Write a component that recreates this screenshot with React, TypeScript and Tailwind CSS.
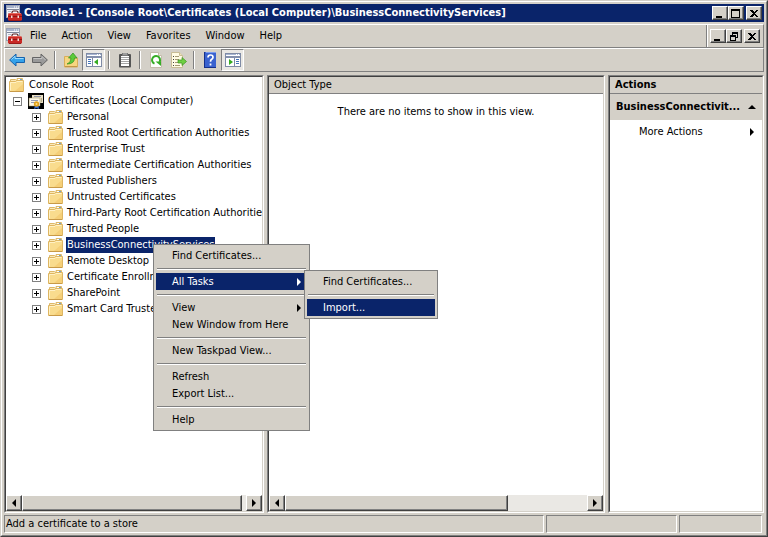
import type { ReactNode } from 'react';
import clsx from 'clsx';

const menus = ['File', 'Action', 'View', 'Favorites', 'Window', 'Help'];

const stores = [
  'Personal',
  'Trusted Root Certification Authorities',
  'Enterprise Trust',
  'Intermediate Certification Authorities',
  'Trusted Publishers',
  'Untrusted Certificates',
  'Third-Party Root Certification Authorities',
  'Trusted People',
  'BusinessConnectivityServices',
  'Remote Desktop',
  'Certificate Enrollment Requests',
  'SharePoint',
  'Smart Card Trusted Roots',
];

const selectedStore = 'BusinessConnectivityServices';

type MenuEntry = { label: string; submenu?: boolean; active?: boolean } | null;

// null is a separator
const contextMenu: MenuEntry[] = [
  { label: 'Find Certificates...' },
  null,
  { label: 'All Tasks', submenu: true, active: true },
  null,
  { label: 'View', submenu: true },
  { label: 'New Window from Here' },
  null,
  { label: 'New Taskpad View...' },
  null,
  { label: 'Refresh' },
  { label: 'Export List...' },
  null,
  { label: 'Help' },
];

const tasksMenu: MenuEntry[] = [
  { label: 'Find Certificates...' },
  null,
  { label: 'Import...', active: true },
];

const raised =
  'bg-[#d4d0c8] border border-t-white border-l-white border-r-[#404040] border-b-[#404040] shadow-[inset_-1px_-1px_0_#808080]';
const sunken =
  'border border-t-[#808080] border-l-[#808080] border-r-white border-b-white';

function Svg({ children, className }: { children: ReactNode; className?: string }) {
  return (
    <svg
      viewBox="0 0 16 16"
      aria-hidden="true"
      className={clsx('h-4 w-4 shrink-0', className)}
    >
      {children}
    </svg>
  );
}

function ConsoleIcon() {
  return (
    <Svg>
      <rect x="0.5" y="0.5" width="13" height="12" fill="#f4f6fa" stroke="#9aa2b4" />
      <rect x="1" y="1" width="12" height="2" fill="#a8b4cc" />
      <path d="M8 2h1M10 2h1M12 2h1" stroke="#fff" />
      <path d="M1 4.5h12" stroke="#7f879a" />
      <path d="M2 6.5h3M2 8.5h1" stroke="#b4bccb" />
      <path d="M6 8.5V7.5q0-1.500 1.500-1.500h3q1.500 0 1.500 1.500v1" fill="none" stroke="#5c2020" strokeWidth="1.200" />
      <path d="M3 8h12l1 1.500v5L15 16H3l-1-1.500v-5z" fill="#c92a26" />
      <path d="M3 8.500h12" stroke="#e8685c" />
      <path d="M2 11.500h14" stroke="#8f1615" />
      <path d="M5 10.500h1.500V13H5zM11.500 10.500H13V13h-1.500z" fill="#f3d8d4" />
      <path d="M3 15.500h12" stroke="#9c1a18" />
    </Svg>
  );
}

function FolderIcon() {
  return (
    <Svg>
      <path d="M1.500 14V2.500h5L8 4V1.500h5.500V14" fill="#fbe9b8" stroke="#dcb868" />
      <path d="M9 2.500h2" stroke="#fff" />
      <path d="M11 2.500h2" stroke="#6d9fd0" />
      <path d="M0.500 14.500v-10h6l1-1h7v11z" fill="#f9dc8e" stroke="#deb662" />
      <path d="M1.500 13.500v-8H7l1-1h5.500" fill="none" stroke="#fff1c4" />
      <path d="M6 14l8-7v7z" fill="#f5cf78" />
      <path d="M1 14.500h13" stroke="#c89a48" />
    </Svg>
  );
}

function CertificateIcon() {
  return (
    <Svg>
      <rect width="16" height="16" fill="#000" />
      <path d="M4 2h11v8H4z" fill="#e9dfc4" />
      <path d="M6 3.500h7" stroke="#8d93a6" />
      <path d="M13.500 5v4" stroke="#b8ad8c" />
      <path d="M1 5h11v8H1z" fill="#fdf8e8" stroke="#9b8c62" strokeWidth="0.500" />
      <path d="M3 7.500h7M3 9.500h4" stroke="#959cb4" />
      <path d="M7 12l-1 4 2.500-1L11 16l-.5-4z" fill="#3567c6" />
      <circle cx="8.500" cy="11" r="2.700" fill="#e3a31c" />
      <circle cx="8.500" cy="11" r="1" fill="#fbe08a" />
    </Svg>
  );
}

function BackIcon() {
  return (
    <Svg>
      <path d="M0.600 8L7 2v3.500h8.500v5H7V14z" fill="#35a2ea" stroke="#1763ad" />
      <path d="M2.500 7.500L6 4.200v2.300h8.500" fill="none" stroke="#9adcff" />
    </Svg>
  );
}

function ForwardIcon() {
  return (
    <Svg>
      <path d="M15.400 8L9 2v3.500H0.500v5H9V14z" fill="#9a9a9a" stroke="#646464" />
      <path d="M1.500 6.500H10V4.500L13.500 8" fill="none" stroke="#c4c4c4" />
    </Svg>
  );
}

function UpFolderIcon() {
  return (
    <Svg>
      <path d="M1.500 15V4.500H6L7 6h7.500v9z" fill="#f7d680" stroke="#d8ae5a" />
      <path d="M2 14.500h12" stroke="#c39545" />
      <path d="M4 12q4-1 4-6H5.500L10 1l4 5h-2.500q0 6-7.500 6z" fill="#5ccb3b" stroke="#2f8f1d" strokeWidth="0.700" />
    </Svg>
  );
}

function TreePaneIcon({ flipped }: { flipped?: boolean }) {
  return (
    <Svg>
      <rect x="0.500" y="1.500" width="15" height="13" fill="#fff" stroke="#7f8ba5" />
      <path d="M1 2.500h14" stroke="#a7b5d2" />
      <path d="M11 2.500h1M13 2.500h1" stroke="#fff" />
      <path d="M1 4.500h14M1 5.500h14" stroke="#8390ad" />
      {flipped ? (
        <>
          <path d="M9.500 6v8" stroke="#7f8ba5" />
          <path d="M11 7.500h3M11 9.500h3M11 11.500h3" stroke="#4273b8" />
          <path d="M4 7l4 3-4 3z" fill="#35ab20" />
        </>
      ) : (
        <>
          <path d="M6.500 6v8" stroke="#7f8ba5" />
          <path d="M2 7.500h3M2 9.500h3M2 11.500h3" stroke="#4273b8" />
          <path d="M12 7l-4 3 4 3z" fill="#35ab20" />
        </>
      )}
    </Svg>
  );
}

function ClipboardIcon() {
  return (
    <Svg>
      <rect x="2" y="2" width="12" height="13.500" rx="1" fill="#555" />
      <rect x="4" y="4" width="8" height="10" fill="#fff" />
      <path d="M4 5.500h8M4 7.500h8M4 9.500h8M4 11.500h8" stroke="#a5a5a5" />
      <path d="M5 1h6v3H5z" fill="#777" />
      <path d="M6 2h4" stroke="#c4c4c4" />
    </Svg>
  );
}

function RefreshIcon() {
  return (
    <Svg>
      <path d="M2.500 0.500h8l3 3v12h-11z" fill="#fff" stroke="#c4bcab" />
      <path d="M10.500 0.500v3h3" fill="#ece7da" stroke="#c4bcab" />
      <path d="M6.500 11.700A4 4 0 1 1 11.500 10" fill="none" stroke="#35ad26" strokeWidth="2" />
      <path d="M7.500 9.500H13v4.500z" fill="#35ad26" />
    </Svg>
  );
}

function ExportIcon() {
  return (
    <Svg>
      <path d="M0.500 0.500h8l3 3v12h-11z" fill="#fffbe4" stroke="#c8bc96" />
      <path d="M8.500 0.500v3h3" fill="#ece3bd" stroke="#c8bc96" />
      <path d="M2 4.500h1M2 7.500h1M2 10.500h1M2 13.500h1" stroke="#444" />
      <path d="M4 4.500h4M4 7.500h4M4 10.500h3M4 13.500h5" stroke="#a49a76" />
      <path d="M7 8h4V5.500l4.500 4L11 13.500V11H7z" fill="#6fd042" stroke="#39921f" strokeWidth="0.700" />
    </Svg>
  );
}

function HelpIcon() {
  return (
    <Svg>
      <path d="M2 0h12v16H2z" fill="#3a62cf" />
      <path d="M2.500 0v16" stroke="#16318a" />
      <path d="M4 0.500h10" stroke="#7b9cf0" />
      <path d="M2 15.500h12" stroke="#16318a" />
      <path d="M6 5.500q0-2.500 2.500-2.500T11 5.200q0 1.300-1.300 2.100T8.500 9.700" fill="none" stroke="#fff" strokeWidth="1.700" />
      <path d="M7.600 11.500h1.800v2H7.600z" fill="#fff" />
    </Svg>
  );
}

const captionShapes = {
  Minimize: <path d="M2 8h6v2H2z" />,
  Maximize: <path fillRule="evenodd" d="M1 1h9v9H1zM2 3h7v6H2z" />,
  Restore: (
    <>
      <path fillRule="evenodd" d="M4 1h6v6H8V6h1V3H5v1H4z" />
      <path fillRule="evenodd" d="M2 4h6v6H2zM3 6h4v3H3z" />
    </>
  ),
  Close: <path d="M2 2h2l2 2 2-2h2v1L7 5.500 10 8v1H8L6 7 4 9H2V8l3-2.500L2 3z" />,
};

function CaptionButton({ name, className }: { name: keyof typeof captionShapes; className?: string }) {
  return (
    <button
      type="button"
      aria-label={name}
      className={clsx('flex h-3.5 w-4 items-center justify-center', raised, className)}
    >
      <svg viewBox="0 0 12 11" aria-hidden="true" shapeRendering="crispEdges" className="h-[11px] w-3 shrink-0">
        {captionShapes[name]}
      </svg>
    </button>
  );
}

function Arrow({ dir }: { dir: 'left' | 'right' | 'up' }) {
  const d = { left: 'M6 0v8L2 4z', right: 'M2 0v8l4-4z', up: 'M0 6h8L4 2z' }[dir];
  return (
    <svg viewBox="0 0 8 8" aria-hidden="true" className="h-2 w-2 shrink-0 fill-current">
      <path d={d} />
    </svg>
  );
}

function ToolButton({ label, pressed, children }: { label: string; pressed?: boolean; children: ReactNode }) {
  return (
    <button
      type="button"
      aria-label={label}
      aria-pressed={pressed}
      className={clsx(
        'flex h-[22px] w-[23px] items-center justify-center border',
        pressed
          ? 'border-t-[#808080] border-l-[#808080] border-r-white border-b-white bg-[#eae8e4]'
          : 'border-transparent'
      )}
    >
      {children}
    </button>
  );
}

function ToolSeparator() {
  return (
    <div className="flex w-2 justify-center">
      <div className="h-[18px] w-0.5 border-l border-r border-l-[#808080] border-r-white" />
    </div>
  );
}

function ScrollBar({ thumb }: { thumb: string }) {
  return (
    <div className="flex h-4 shrink-0 bg-[#eae8e4]">
      <button type="button" aria-label="Scroll left" className={clsx('flex w-4 shrink-0 items-center justify-center', raised)}>
        <Arrow dir="left" />
      </button>
      <div className="flex-1">
        <div className={clsx('h-full', raised, thumb)} />
      </div>
      <button type="button" aria-label="Scroll right" className={clsx('flex w-4 shrink-0 items-center justify-center', raised)}>
        <Arrow dir="right" />
      </button>
    </div>
  );
}

function Expander({ open }: { open?: boolean }) {
  return (
    <button
      type="button"
      aria-label={open ? 'Collapse' : 'Expand'}
      className="flex h-[9px] w-[9px] shrink-0 border border-[#808080] bg-white"
    >
      <svg viewBox="0 0 7 7" aria-hidden="true" shapeRendering="crispEdges" className="h-[7px] w-[7px]">
        <path d={open ? 'M1 3h5v1H1z' : 'M1 3h5v1H1zM3 1h1v5H3z'} />
      </svg>
    </button>
  );
}

function Pane({ className, children }: { className: string; children: ReactNode }) {
  return (
    <div className={clsx('flex min-w-0 flex-col', sunken, className)}>
      <div className="flex min-h-0 flex-1 flex-col border border-t-[#404040] border-r-[#d4d0c8] border-b-[#d4d0c8] border-l-[#404040] bg-white">
        {children}
      </div>
    </div>
  );
}

function PopupMenu({ items, className }: { items: MenuEntry[]; className: string }) {
  return (
    <div role="menu" className={clsx('absolute border border-[#808080] bg-[#d4d0c8] p-0.5', className)}>
      {items.map((item, i) =>
        item ? (
          <button
            key={item.label}
            type="button"
            role="menuitem"
            className={clsx(
              'flex h-[17px] w-full items-center justify-between pr-1 pl-4',
              item.active && 'bg-[#0a246a] text-white'
            )}
          >
            {item.label}
            {item.submenu && <Arrow dir="right" />}
          </button>
        ) : (
          <div key={i} className="flex h-[9px] items-center px-px">
            <div className="h-0.5 w-full border-t border-b border-t-[#808080] border-b-white" />
          </div>
        )
      )}
    </div>
  );
}

export default function App() {
  return (
    <div className="relative h-screen overflow-hidden border border-t-[#d4d0c8] border-r-[#404040] border-b-[#404040] border-l-[#d4d0c8] bg-[#d4d0c8] font-['DejaVu_Sans_Condensed','DejaVu_Sans',sans-serif] text-[11px] leading-4 whitespace-nowrap text-black">
      <div className="flex h-full flex-col border border-t-white border-r-[#808080] border-b-[#808080] border-l-white p-0.5">
        <header className="flex h-[18px] shrink-0 items-center bg-[#0a246a] px-0.5 text-white">
          <ConsoleIcon />
          <h1 className="ml-0.5 min-w-0 flex-1 truncate font-bold">
            Console1 - [Console Root\Certificates (Local Computer)\BusinessConnectivityServices]
          </h1>
          <div className="flex text-black">
            <CaptionButton name="Minimize" />
            <CaptionButton name="Maximize" />
            <CaptionButton name="Close" className="ml-0.5" />
          </div>
        </header>

        <div className="mt-0.5 flex h-6 shrink-0 border border-t-white border-r-[#808080] border-b-[#808080] border-l-white">
          <div className="flex flex-1 items-center border-r border-[#808080] pl-px">
            <ConsoleIcon />
            <nav className="flex pl-px">
              {menus.map((menu) => (
                <button key={menu} type="button" className="pr-2 pl-[7px]">
                  {menu}
                </button>
              ))}
            </nav>
          </div>
          <div className="flex items-center border-l border-white pr-[3px] pl-0.5">
            <CaptionButton name="Minimize" />
            <CaptionButton name="Restore" />
            <CaptionButton name="Close" className="ml-0.5" />
          </div>
        </div>

        <div role="toolbar" className="flex h-6 shrink-0 items-center border border-t-white border-r-[#808080] border-b-[#808080] border-l-white">
          <ToolButton label="Back"><BackIcon /></ToolButton>
          <ToolButton label="Forward"><ForwardIcon /></ToolButton>
          <ToolSeparator />
          <ToolButton label="Up One Level"><UpFolderIcon /></ToolButton>
          <ToolButton label="Show/Hide Console Tree" pressed><TreePaneIcon /></ToolButton>
          <ToolSeparator />
          <ToolButton label="Paste"><ClipboardIcon /></ToolButton>
          <ToolSeparator />
          <ToolButton label="Refresh"><RefreshIcon /></ToolButton>
          <ToolButton label="Export List"><ExportIcon /></ToolButton>
          <ToolSeparator />
          <ToolButton label="Help"><HelpIcon /></ToolButton>
          <ToolButton label="Show/Hide Action Pane" pressed><TreePaneIcon flipped /></ToolButton>
        </div>

        <main className="mt-[3px] flex min-h-0 flex-1 gap-[3px]">
          <Pane className="w-[260px] shrink-0">
            <ul role="tree" className="min-h-0 flex-1 overflow-hidden">
              <li className="flex h-4 items-center gap-1 pl-[3px]">
                <FolderIcon />
                Console Root
              </li>
              <li className="flex h-4 items-center pl-[7px]">
                <Expander open />
                <span className="ml-1.5 flex gap-1">
                  <CertificateIcon />
                  Certificates (Local Computer)
                </span>
              </li>
              {stores.map((store) => (
                <li key={store} className="flex h-4 items-center pl-[26px]">
                  <Expander />
                  <span className="ml-[7px] flex gap-0.5">
                    <FolderIcon />
                    <span className={clsx('px-px', store === selectedStore && 'bg-[#0a246a] text-white')}>
                      {store}
                    </span>
                  </span>
                </li>
              ))}
            </ul>
            <ScrollBar thumb="w-[98%]" />
          </Pane>

          <Pane className="flex-1">
            <div className="h-[17px] shrink-0 border-b border-[#808080] bg-[#d4d0c8] pl-[5px]">Object Type</div>
            <p className="flex-1 pt-2.5 text-center">There are no items to show in this view.</p>
            <ScrollBar thumb="w-[74%]" />
          </Pane>

          <Pane className="w-[156px] shrink-0">
            <h2 className="h-[17px] shrink-0 border-b border-[#808080] bg-[#d4d0c8] pl-[5px] font-bold">Actions</h2>
            <button type="button" className="flex h-[26px] shrink-0 items-center justify-between bg-[#d4d0c8] pr-1.5 pl-1.5 font-bold">
              BusinessConnectivit...
              <Arrow dir="up" />
            </button>
            <button type="button" className="mt-1 flex items-center justify-between pr-1.5 pl-[29px]">
              More Actions
              <Arrow dir="right" />
            </button>
          </Pane>
        </main>

        <footer className="mt-0.5 flex h-[18px] shrink-0 gap-0.5 pr-0.5">
          <div className={clsx('flex-1 pl-px', sunken)}>Add a certificate to a store</div>
          <div className={clsx('w-[131px]', sunken)} />
          <div className={clsx('w-[83px]', sunken)} />
        </footer>
      </div>

      <PopupMenu items={contextMenu} className="top-[243px] left-[152px] w-[157px]" />
      <PopupMenu items={tasksMenu} className="top-[269px] left-[303px] w-[134px]" />
    </div>
  );
}
